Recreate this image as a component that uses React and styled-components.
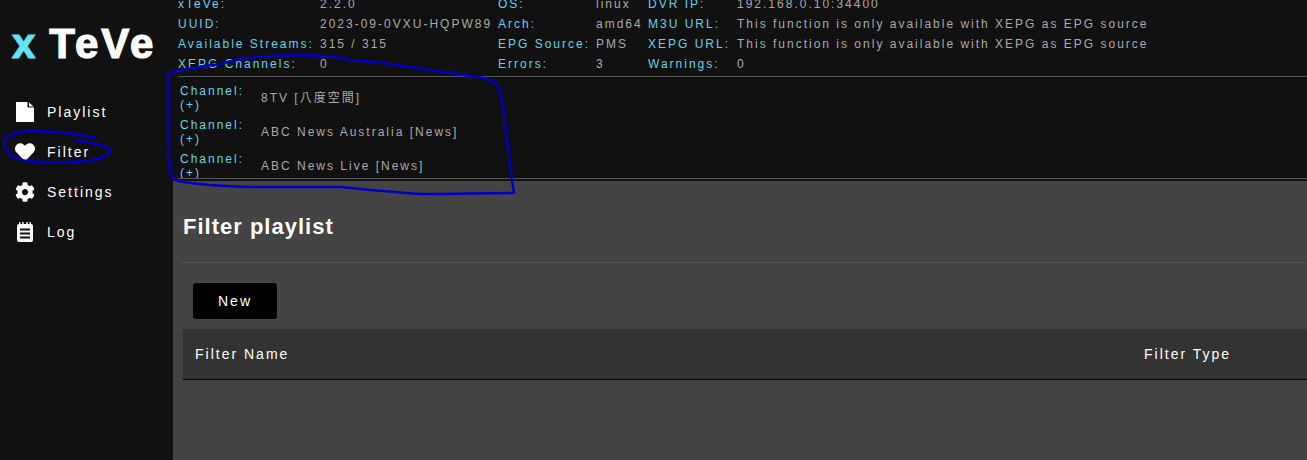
import React from "react";
import styled, { createGlobalStyle } from "styled-components";

const Global = createGlobalStyle`
  html, body { margin: 0; padding: 0; height: 100%; background: #444; overflow: hidden; }
  body { font-family: "Liberation Sans", "Noto Sans CJK TC", Arial, sans-serif; }
  * { box-sizing: border-box; }
`;

const Page = styled.div`
  position: relative;
  display: flex;
  width: 1307px;
  height: 460px;
  overflow: hidden;
`;
const Sidebar = styled.nav`
  flex: 0 0 173px;
  background: #111;
  padding-top: 22px;
`;
const Logo = styled.div`
  font-size: 42px;
  font-weight: 700;
  line-height: 44px;
  color: #fff;
  padding-left: 12px;
  white-space: nowrap;
  letter-spacing: 3px;
  -webkit-text-stroke: 1.2px currentColor;
  span { color: #5fe3f5; margin-right: 11px; }
`;
const Menu = styled.div`
  margin-top: 26px;
  display: flex;
  flex-direction: column;
`;
const MenuItem = styled.div`
  display: flex;
  align-items: center;
  height: 40px;
  padding-left: 15px;
  gap: 12px;
  color: #fff;
  font-size: 14px;
  letter-spacing: 2px;
  svg { width: 20px; height: 20px; fill: #fff; flex: none; }
`;
const Main = styled.main`
  flex: 1;
  min-width: 0;
  display: flex;
  flex-direction: column;
`;
const Header = styled.header`
  background: #111;
  height: 181px;
  padding-left: 5px;
  overflow: hidden;
`;
const Info = styled.div`
  display: grid;
  grid-template-columns: 142px 178px 98px 52px 89px 1fr;
  grid-auto-rows: 20px;
  margin-top: -6px;
  height: 83px;
  padding-bottom: 3px;
  border-bottom: 1px solid #555;
  font-size: 12px;
  letter-spacing: 2px;
  align-items: center;
  white-space: nowrap;
`;
const Label = styled.div`
  color: #5fd5e8;
`;
const Value = styled.div`
  color: #aaa;
`;
const Channels = styled.div`
  padding: 4px 0 0 2px;
  height: 102px;
  overflow: hidden;
  border-bottom: 1px solid #555;
`;
const ChannelRow = styled.div`
  display: grid;
  grid-template-columns: 81px 1fr;
  height: 34px;
  align-items: center;
  font-size: 12px;
  letter-spacing: 2px;
  line-height: 14px;
`;
const Content = styled.section`
  flex: 1;
  background: #444;
  padding: 0 0 0 10px;
`;
const Title = styled.h1`
  margin: 0;
  height: 82px;
  line-height: 91px;
  font-size: 22px;
  font-weight: 700;
  color: #fff;
  letter-spacing: 1px;
  border-bottom: 1px solid #555;
`;
const Actions = styled.div`
  padding: 20px 10px 10px;
`;
const Button = styled.button`
  display: block;
  width: 84px;
  height: 36px;
  background: #000;
  color: #fff;
  border: 0;
  border-radius: 3px;
  font: 14px "Liberation Sans", Arial, sans-serif;
  letter-spacing: 2px;
`;
const TableHead = styled.div`
  display: grid;
  grid-template-columns: 949px 1fr;
  align-items: center;
  height: 51px;
  padding-left: 12px;
  background: #333;
  border-bottom: 1px solid #000;
  color: #fff;
  font-size: 14px;
  letter-spacing: 2px;
`;
const Scribble = styled.svg`
  position: absolute;
  left: 0;
  top: 0;
  width: 1307px;
  height: 460px;
  pointer-events: none;
  path { fill: none; stroke: #0000c8; stroke-width: 2.5; stroke-linecap: round; stroke-linejoin: round; }
`;

const rows = [
  ["xTeVe:", "2.2.0", "OS:", "linux", "DVR IP:", "192.168.0.10:34400"],
  ["UUID:", "2023-09-0VXU-HQPW89", "Arch:", "amd64", "M3U URL:", "This function is only available with XEPG as EPG source"],
  ["Available Streams:", "315 / 315", "EPG Source:", "PMS", "XEPG URL:", "This function is only available with XEPG as EPG source"],
  ["XEPG Channels:", "0", "Errors:", "3", "Warnings:", "0"],
];
const channels = ["8TV [八度空間]", "ABC News Australia [News]", "ABC News Live [News]"];

export default function App() {
  return (
    <Page>
      <Global />
      <Sidebar>
        <Logo><span>x</span>TeVe</Logo>
        <Menu>
          <MenuItem>
            <svg viewBox="0 0 20 20"><path d="M1 0H12.500V5.500H19V19.500Q19 20 18.500 20H1.500Q1 20 1 19.500ZM14 0.500L18.500 4.500H14Z" /></svg>
            Playlist
          </MenuItem>
          <MenuItem>
            <svg viewBox="0 0 512 512"><path d="M462.300 62.600C407.500 15.900 326 24.300 275.700 76.200L256 96.500l-19.700-20.300C186.100 24.300 104.500 15.900 49.700 62.600c-62.800 53.600-66.100 149.800-9.900 207.900l193.500 199.800c12.500 12.900 32.800 12.900 45.300 0l193.500-199.800c56.300-58.100 53-154.300-9.800-207.900z"/></svg>
            Filter
          </MenuItem>
          <MenuItem>
            <svg viewBox="0 0 512 512"><path d="M487.400 315.700l-42.600-24.600c4.300-23.200 4.300-47 0-70.200l42.600-24.600c4.900-2.800 7.100-8.600 5.500-14-11.100-35.600-30-67.800-54.700-94.600-3.800-4.100-10-5.100-14.800-2.300L380.800 110c-17.900-15.400-38.500-27.300-60.800-35.100V25.800c0-5.600-3.900-10.500-9.400-11.700-36.700-8.200-74.300-7.800-109.200 0-5.500 1.200-9.400 6.100-9.400 11.700V75c-22.200 7.900-42.800 19.800-60.800 35.100L88.700 85.500c-4.900-2.800-11-1.900-14.800 2.300-24.700 26.700-43.600 58.900-54.700 94.600-1.700 5.400.6 11.200 5.500 14L67.300 221c-4.300 23.200-4.300 47 0 70.200l-42.600 24.600c-4.900 2.800-7.100 8.600-5.500 14 11.100 35.600 30 67.800 54.700 94.600 3.800 4.100 10 5.100 14.800 2.300l42.600-24.600c17.900 15.400 38.500 27.300 60.800 35.100v49.200c0 5.600 3.900 10.500 9.400 11.700 36.700 8.200 74.300 7.800 109.200 0 5.500-1.200 9.400-6.100 9.400-11.700v-49.200c22.200-7.900 42.800-19.800 60.800-35.100l42.600 24.600c4.900 2.800 11 1.900 14.800-2.300 24.700-26.700 43.600-58.900 54.700-94.600 1.500-5.500-.7-11.300-5.600-14.100zM256 336c-44.100 0-80-35.900-80-80s35.900-80 80-80 80 35.900 80 80-35.900 80-80 80z"/></svg>
            Settings
          </MenuItem>
          <MenuItem>
            <svg viewBox="0 0 20 20"><path fillRule="evenodd" d="M4 0H5.400V2H7.300V0H8.700V2H11.300V0H12.700V2H14.600V0H16V2Q18 2 18 4V18Q18 20 16 20H4Q2 20 2 18V4Q2 2 4 2ZM5 6.500V8.500H15V6.500ZM5 10.500V12.500H15V10.500ZM5 14.500V16.500H15V14.500Z" /></svg>
            Log
          </MenuItem>
        </Menu>
      </Sidebar>
      <Main>
        <Header>
          <Info>
            {rows.flat().map((t, i) => i % 2 === 0 ? <Label key={i}>{t}</Label> : <Value key={i}>{t}</Value>)}
          </Info>
          <Channels>
            {channels.map((c) => (
              <ChannelRow key={c}>
                <Label>Channel:<br />(+)</Label>
                <Value>{c}</Value>
              </ChannelRow>
            ))}
          </Channels>
        </Header>
        <Content>
          <Title>Filter playlist</Title>
          <Actions><Button>New</Button></Actions>
          <TableHead><span>Filter Name</span><span>Filter Type</span></TableHead>
        </Content>
      </Main>
      <Scribble viewBox="0 0 1307 460">
        <path d="M168 73C178 71 185 69 193 68C205 66 212 65 220 64C235 60 245 58 257 57C275 55 290 55 300 55C315 55 328 56 340 58C345 59 348 60 350 60C362 61 372 62 383 63C410 67 438 71 463 75C472 76 481 77 487 79C492 81 495 83 497 85C500 92 502 100 503 107C505 127 508 147 510 167C511 177 513 185 514 193C485 193 458 194 430 194C412 194 398 192 383 191C368 190 354 188 340 187C313 187 287 187 260 187C243 187 227 186 210 185C198 184 187 183 177 181C173 179 171 176 170 173C169 160 168 147 168 133C168 113 168 93 168 73Z" />
        <path d="M95 138C85 136 76 134 67 133C55 132 44 131 33 131C25 131 17 132 10 135C6 137 4 140 4 143C4 148 7 152 10 155C15 158 21 160 27 161C40 162 54 163 67 162C79 162 91 161 100 158C105 156 109 153 110 150C108 148 104 146 100 145C92 143 85 142 77 141" />
      </Scribble>
    </Page>
  );
}
